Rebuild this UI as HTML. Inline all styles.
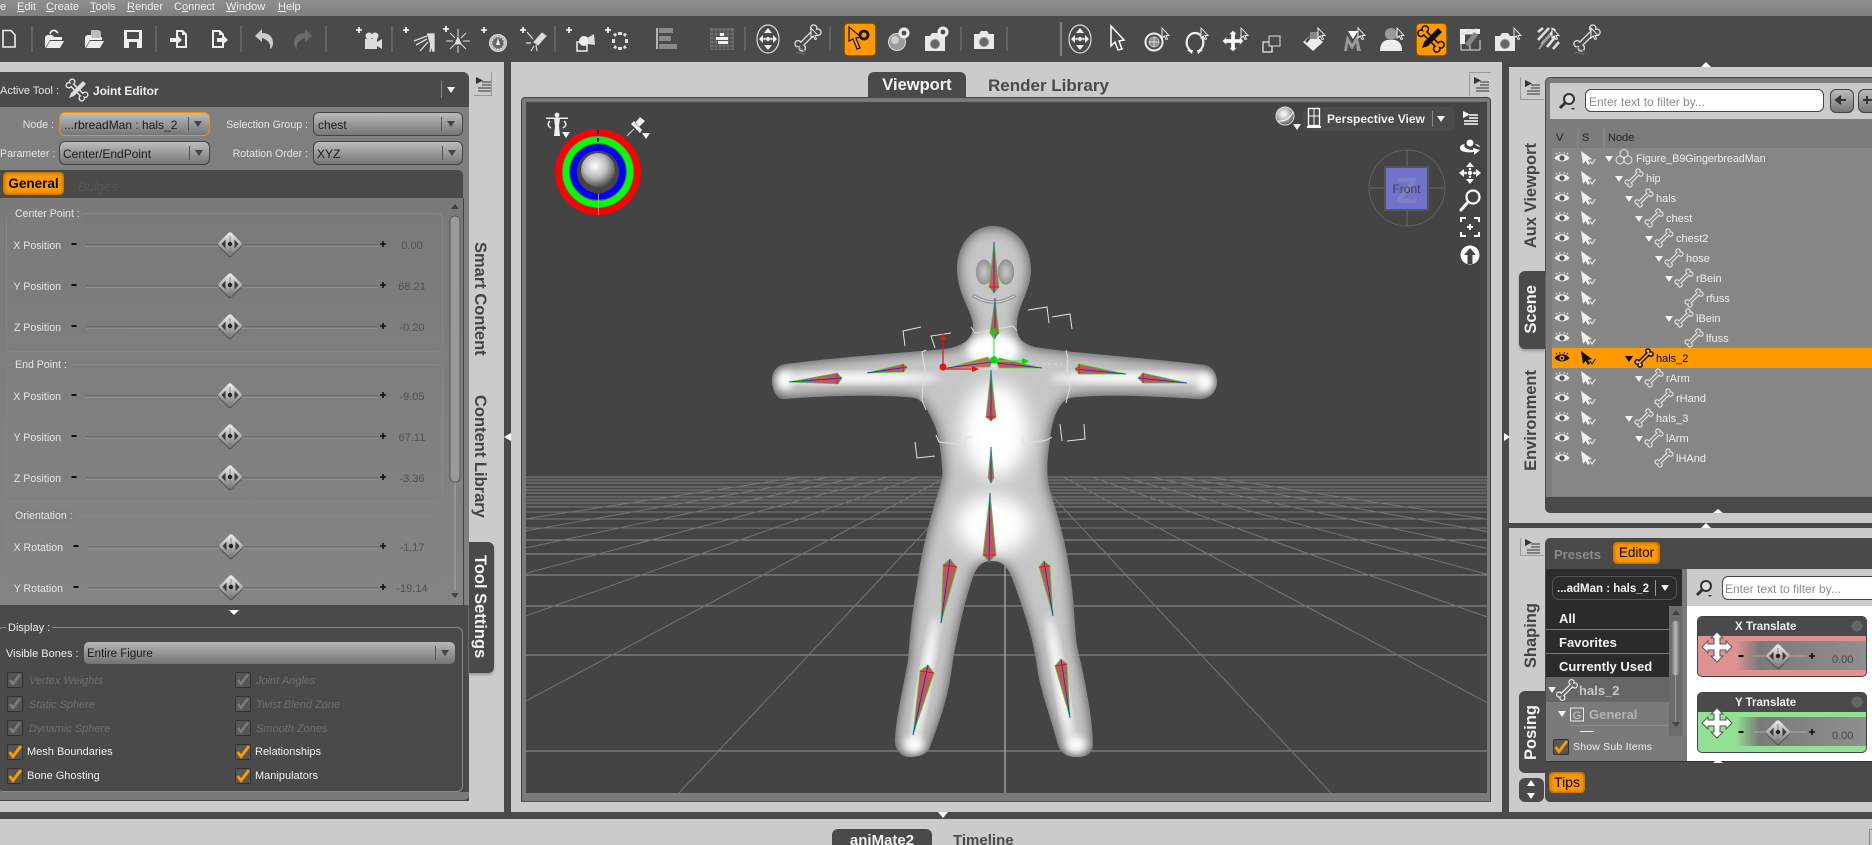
<!DOCTYPE html>
<html><head><meta charset="utf-8"><title>Joint Editor</title>
<style>
html,body{margin:0;padding:0;background:#cbcbcb}
#p{position:relative;width:1872px;height:845px;overflow:hidden;background:#cbcbcb;font-family:"Liberation Sans",Arial,sans-serif;font-size:11px;color:#eee}
#p div{position:absolute;box-sizing:border-box}
.t{position:absolute;white-space:nowrap;line-height:14px;height:14px;margin-top:1px}
.l{color:#e6e6e6;text-align:right;font-size:10.6px}
.v{color:#505050;width:50px;text-align:center}
.c{background:linear-gradient(#bcbcbc,#767676);border:1px solid #444;border-radius:6px}
.d{color:#6f6f6f;font-style:italic}
.w{color:#f0f0f0}
.g{border:1px solid #868686;border-radius:6px}
.vt{position:absolute;writing-mode:vertical-rl;font-weight:bold;font-size:16.5px;line-height:20px;color:#444;white-space:nowrap}
.up{transform:rotate(180deg)}
.n{color:#f0f0f0;font-size:11px}
.o{background:#ff9900;color:#000;border-radius:4px;box-shadow:inset 0 0 4px #7a4a00;text-align:center}
u{text-decoration:underline}
</style></head><body><div id="p">

<!-- bars -->
<div style="left:0;top:0;width:1872px;height:16px;background:linear-gradient(#8e8e8e,#808080)"></div>
<div style="left:0;top:16px;width:1872px;height:46px;background:#4a4a4a"></div>
<div style="left:1502px;top:62px;width:370px;height:5px;background:#4a4a4a"></div>
<div style="left:504px;top:62px;width:7px;height:750px;background:#4a4a4a"></div>
<div style="left:1502px;top:62px;width:7px;height:750px;background:#4a4a4a"></div>
<div style="left:0;top:812px;width:1872px;height:7px;background:#4a4a4a"></div>
<div style="left:1509px;top:523px;width:363px;height:5px;background:#4a4a4a"></div>

<!-- menu -->
<span class="t" style="left:0;top:-1px">e</span>
<span class="t" style="left:17px;top:-1px"><u>E</u>dit</span>
<span class="t" style="left:46px;top:-1px"><u>C</u>reate</span>
<span class="t" style="left:90px;top:-1px"><u>T</u>ools</span>
<span class="t" style="left:127px;top:-1px"><u>R</u>ender</span>
<span class="t" style="left:174px;top:-1px">C<u>o</u>nnect</span>
<span class="t" style="left:226px;top:-1px"><u>W</u>indow</span>
<span class="t" style="left:278px;top:-1px"><u>H</u>elp</span>

<!-- left panel -->
<div style="left:0;top:72px;width:469px;height:35px;background:#4a4a4a;border-radius:0 6px 0 0"></div>
<div style="left:0;top:107px;width:469px;height:498px;background:#7f7f7f"></div>
<div style="left:0;top:170px;width:463px;height:30px;background:#4a4a4a;border-radius:0 5px 0 0"></div>
<div style="left:0;top:198px;width:464px;height:408px;background:linear-gradient(#7a7a7a,#848484);border-right:1px solid #444;border-bottom:1px solid #444"></div>
<div style="left:0;top:605px;width:469px;height:196px;background:#4a4a4a"></div>
<div style="left:0;top:792px;width:469px;height:9px;background:#7a7a7a;border-radius:0 0 5px 0;border-bottom:1px solid #444"></div>
<div style="left:474px;top:72px;width:18px;height:24px;border-right:1px solid #999;border-bottom:1px solid #999"></div>

<span class="t" style="left:0;top:83px;color:#e6e6e6">Active Tool :</span>
<span class="t" style="left:93px;top:83px;font-size:12px;font-weight:bold;color:#eee;letter-spacing:-.1px">Joint Editor</span>
<div style="left:441px;top:81px;width:1px;height:17px;background:#888"></div>

<span class="t l" style="left:0;width:54px;top:117px">Node :</span>
<span class="t l" style="left:0;width:54px;top:146px">Parameter :</span>
<span class="t l" style="left:210px;width:98px;top:117px">Selection Group :</span>
<span class="t l" style="left:210px;width:98px;top:146px">Rotation Order :</span>
<div class="c" style="left:59px;top:112px;width:151px;height:24px;border:1px solid #f09000"></div>
<div class="c" style="left:59px;top:141px;width:151px;height:24px"></div>
<div class="c" style="left:313px;top:112px;width:150px;height:24px"></div>
<div class="c" style="left:313px;top:141px;width:150px;height:24px"></div>
<span class="t" style="left:64px;top:117px;color:#1c1c1c;font-size:12px">...rbreadMan : hals_2</span>
<span class="t" style="left:63px;top:146px;color:#1c1c1c;font-size:12px">Center/EndPoint</span>
<span class="t" style="left:318px;top:117px;color:#1c1c1c;font-size:12px">chest</span>
<span class="t" style="left:317px;top:146px;color:#1c1c1c;font-size:12px">XYZ</span>
<div style="left:188px;top:117px;width:1px;height:14px;background:#555"></div>
<div style="left:189px;top:146px;width:1px;height:14px;background:#555"></div>
<div style="left:441px;top:117px;width:1px;height:14px;background:#555"></div>
<div style="left:442px;top:146px;width:1px;height:14px;background:#555"></div>
<div class="o" style="left:3px;top:172px;width:61px;height:23px;font-size:13.5px;font-weight:bold;line-height:24px">General</div>
<span class="t" style="left:78px;top:179px;color:#565656;font-style:italic;font-size:13px">Bulges</span>

<div class="g" style="left:6px;top:213px;width:437px;height:139px"></div>
<div class="g" style="left:6px;top:364px;width:437px;height:138px"></div>
<div class="g" style="left:6px;top:515px;width:437px;height:90px;border-bottom:0"></div>
<span class="t l" style="left:12px;top:206px;background:#7c7c7c;padding:0 3px;text-align:left">Center Point :</span>
<span class="t l" style="left:12px;top:357px;background:#7e7e7e;padding:0 3px;text-align:left">End Point :</span>
<span class="t l" style="left:12px;top:508px;background:#808080;padding:0 3px;text-align:left">Orientation :</span>

<span class="t l" style="left:0;width:61px;top:238px">X Position</span>
<span class="t l" style="left:0;width:61px;top:279px">Y Position</span>
<span class="t l" style="left:0;width:61px;top:320px">Z Position</span>
<span class="t l" style="left:0;width:61px;top:389px">X Position</span>
<span class="t l" style="left:0;width:61px;top:430px">Y Position</span>
<span class="t l" style="left:0;width:61px;top:471px">Z Position</span>
<span class="t l" style="left:0;width:63px;top:540px">X Rotation</span>
<span class="t l" style="left:0;width:63px;top:581px">Y Rotation</span>
<span class="t v" style="left:387px;top:238px">0.00</span>
<span class="t v" style="left:387px;top:279px">68.21</span>
<span class="t v" style="left:387px;top:320px">-0.20</span>
<span class="t v" style="left:387px;top:389px">-9.05</span>
<span class="t v" style="left:387px;top:430px">67.11</span>
<span class="t v" style="left:387px;top:471px">-3.36</span>
<span class="t v" style="left:387px;top:540px">-1.17</span>
<span class="t v" style="left:387px;top:581px">-19.14</span>

<!-- display -->
<div style="left:-3px;top:627px;width:466px;height:165px;border:1px solid #8a8a8a;border-radius:6px"></div>
<span class="t" style="left:6px;top:620px;background:#4a4a4a;padding:0 2px;color:#eee">Display :</span>
<span class="t" style="left:6px;top:646px;color:#eee">Visible Bones :</span>
<div style="left:84px;top:642px;width:371px;height:22px;background:linear-gradient(#b6b6b6,#737373);border-radius:5px"></div>
<span class="t" style="left:87px;top:646px;color:#1c1c1c;font-size:11.5px">Entire Figure</span>
<div style="left:435px;top:646px;width:1px;height:14px;background:#555"></div>
<span class="t d" style="left:29px;top:673px">Vertex Weights</span>
<span class="t d" style="left:29px;top:697px">Static Sphere</span>
<span class="t d" style="left:29px;top:721px">Dynamic Sphere</span>
<span class="t w" style="left:27px;top:744px">Mesh Boundaries</span>
<span class="t w" style="left:27px;top:768px">Bone Ghosting</span>
<span class="t d" style="left:256px;top:673px">Joint Angles</span>
<span class="t d" style="left:256px;top:697px">Twist Blend Zone</span>
<span class="t d" style="left:256px;top:721px">Smooth Zones</span>
<span class="t w" style="left:255px;top:744px">Relationships</span>
<span class="t w" style="left:255px;top:768px">Manipulators</span>

<!-- left side tabs -->
<div class="vt" style="left:470px;top:242px">Smart Content</div>
<div class="vt" style="left:470px;top:395px">Content Library</div>
<div style="left:469px;top:542px;width:25px;height:131px;background:#4a4a4a;border-radius:0 6px 6px 0;box-shadow:0 2px 2px #999"></div>
<div class="vt" style="left:470px;top:555px;color:#f4f4f4">Tool Settings</div>

<!-- viewport -->
<div style="left:868px;top:72px;width:98px;height:25px;background:#4a4a4a;border-radius:6px 6px 0 0;color:#f4f4f4;font-weight:bold;font-size:16.5px;line-height:27px;text-align:center">Viewport</div>
<span class="t" style="left:988px;top:76px;color:#4a4a4a;font-weight:bold;font-size:17px;line-height:18px;height:18px">Render Library</span>
<div style="left:1469px;top:72px;width:22px;height:24px;border-left:1px solid #999;border-top:1px solid #999"></div>
<div style="left:521px;top:97px;width:970px;height:705px;background:#7a7a7a;border:1px solid #444;border-bottom:1px solid #555;border-radius:4px 4px 0 0"></div>
<div id="vp" style="left:526px;top:102px;width:961px;height:691px;background:#444"></div>
<div style="left:1303px;top:107px;width:152px;height:24px;background:#4b4b4b;border-radius:6px"></div>
<span class="t" style="left:1327px;top:111px;font-size:12px;font-weight:bold;color:#f0f0f0">Perspective View</span>
<div style="left:1432px;top:111px;width:1px;height:16px;background:#888"></div>

<!-- right top panel -->
<div style="left:1545px;top:77px;width:327px;height:436px;background:#4a4a4a;border-radius:5px 0 0 5px"></div>
<div style="left:1546px;top:78px;width:326px;height:419px;background:#7c7c7c;border-radius:4px 0 0 0"></div>
<div style="left:1550px;top:83px;width:322px;height:36px;background:#cbcbcb"></div>
<div style="left:1552px;top:127px;width:320px;height:369px;background:#868686"></div>
<div style="left:1585px;top:89px;width:239px;height:23px;background:#fff;border:1px solid #444;border-radius:6px"></div>
<span class="t" style="left:1589px;top:94px;color:#8c8c8c;font-size:12px">Enter text to filter by...</span>
<div class="c" style="left:1830px;top:89px;width:24px;height:24px"></div>
<div class="c" style="left:1858px;top:89px;width:24px;height:24px"></div>
<div style="left:1552px;top:127px;width:25px;height:21px;background:#7c7c7c"></div>
<div style="left:1579px;top:127px;width:24px;height:21px;background:#7c7c7c"></div>
<div style="left:1605px;top:127px;width:267px;height:21px;background:#7c7c7c"></div>
<span class="t" style="left:1556px;top:130px;color:#222">V</span>
<span class="t" style="left:1582px;top:130px;color:#222">S</span>
<span class="t" style="left:1608px;top:130px;color:#222">Node</span>
<div style="left:1552px;top:348px;width:320px;height:20px;background:#ff9900"></div>
<span class="t n" style="left:1636px;top:151px;font-size:10.7px">Figure_B9GingerbreadMan</span>
<span class="t n" style="left:1646px;top:171px">hip</span>
<span class="t n" style="left:1656px;top:191px">hals</span>
<span class="t n" style="left:1666px;top:211px">chest</span>
<span class="t n" style="left:1676px;top:231px">chest2</span>
<span class="t n" style="left:1686px;top:251px">hose</span>
<span class="t n" style="left:1696px;top:271px">rBein</span>
<span class="t n" style="left:1706px;top:291px">rfuss</span>
<span class="t n" style="left:1696px;top:311px">lBein</span>
<span class="t n" style="left:1706px;top:331px">lfuss</span>
<span class="t n" style="left:1656px;top:351px;color:#000">hals_2</span>
<span class="t n" style="left:1666px;top:371px">rArm</span>
<span class="t n" style="left:1676px;top:391px">rHand</span>
<span class="t n" style="left:1656px;top:411px">hals_3</span>
<span class="t n" style="left:1666px;top:431px">lArm</span>
<span class="t n" style="left:1676px;top:451px">lHAnd</span>
<div style="left:1520px;top:77px;width:24px;height:23px;border-left:1px solid #999;border-bottom:1px solid #999"></div>
<div class="vt up" style="left:1521px;top:143px">Aux Viewport</div>
<div style="left:1519px;top:271px;width:26px;height:78px;background:#4a4a4a;border-radius:6px 0 0 6px;box-shadow:0 2px 2px #999"></div>
<div class="vt up" style="left:1521px;top:285px;color:#f4f4f4">Scene</div>
<div class="vt up" style="left:1521px;top:370px">Environment</div>

<!-- right bottom panel -->
<div style="left:1545px;top:538px;width:327px;height:264px;background:#4a4a4a;border-radius:5px 0 0 5px"></div>
<span class="t" style="left:1554px;top:546px;color:#8a8a8a;font-weight:bold;font-size:13px;line-height:16px;height:16px">Presets</span>
<div class="o" style="left:1613px;top:542px;width:47px;height:22px;font-size:13.5px;line-height:22px">Editor</div>
<div style="left:1546px;top:569px;width:141px;height:192px;background:#7a7a7a"></div>
<div style="left:1687px;top:569px;width:185px;height:192px;background:#fff"></div>
<div style="left:1687px;top:569px;width:185px;height:37px;background:#cbcbcb"></div>
<div style="left:1546px;top:569px;width:136px;height:37px;background:#2b2b2b"></div>
<div style="left:1552px;top:576px;width:125px;height:24px;border:1px solid #555;border-radius:7px"></div>
<span class="t" style="left:1557px;top:581px;font-weight:bold;font-size:11.5px;color:#f4f4f4">...adMan : hals_2</span>
<div style="left:1655px;top:580px;width:1px;height:16px;background:#999"></div>
<div style="left:1722px;top:576px;width:160px;height:24px;background:#fff;border:1px solid #444;border-radius:6px"></div>
<span class="t" style="left:1725px;top:581px;color:#8c8c8c;font-size:12px">Enter text to filter by...</span>
<div style="left:1546px;top:606px;width:123px;height:23px;background:#2b2b2b"></div>
<div style="left:1546px;top:630px;width:123px;height:23px;background:#2b2b2b"></div>
<div style="left:1546px;top:654px;width:123px;height:23px;background:#2b2b2b"></div>
<div style="left:1546px;top:677px;width:123px;height:25px;background:#666"></div>
<span class="t" style="left:1559px;top:611px;font-weight:bold;font-size:13px;color:#f4f4f4">All</span>
<span class="t" style="left:1559px;top:635px;font-weight:bold;font-size:13px;color:#f4f4f4">Favorites</span>
<span class="t" style="left:1559px;top:659px;font-weight:bold;font-size:13px;color:#f4f4f4">Currently Used</span>
<span class="t" style="left:1579px;top:683px;font-weight:bold;font-size:13px;color:#c8c8c8">hals_2</span>
<span class="t" style="left:1589px;top:707px;font-weight:bold;font-size:13px;color:#b4b4b4">General</span>
<div style="left:1570px;top:725px;width:99px;height:1px;background:#8c8c8c"></div>
<div style="left:1580px;top:731px;width:14px;height:1px;background:#eee"></div>
<div style="left:1669px;top:606px;width:13px;height:130px;background:#6c6c6c"></div>
<div style="left:1671px;top:621px;width:9px;height:54px;background:linear-gradient(90deg,#666,#bbb,#666);border-radius:4px"></div>
<div style="left:1675px;top:675px;width:1px;height:50px;background:#999"></div>
<span class="t" style="left:1573px;top:739px;color:#eee;font-size:10.5px;letter-spacing:.2px">Show Sub Items</span>
<div style="left:1546px;top:761px;width:326px;height:1px;background:#333"></div>

<div style="left:1697px;top:616px;width:170px;height:61px;background:#e09292;border:1px solid #444;border-radius:5px"></div>
<div style="left:1698px;top:617px;width:168px;height:19px;background:#4a4a4a;border-radius:4px 4px 0 0"></div>
<div style="left:1736px;top:641px;width:130px;height:29px;background:linear-gradient(90deg,#e09292 0,#7a7a7a 18%,#8f8f8f 100%)"></div>
<div style="left:1697px;top:692px;width:170px;height:61px;background:#92e092;border:1px solid #444;border-radius:5px"></div>
<div style="left:1698px;top:693px;width:168px;height:19px;background:#4a4a4a;border-radius:4px 4px 0 0"></div>
<div style="left:1736px;top:717px;width:130px;height:29px;background:linear-gradient(90deg,#92e092 0,#7a7a7a 18%,#8f8f8f 100%)"></div>
<span class="t" style="left:1735px;top:619px;font-weight:bold;font-size:11.5px;color:#f0f0f0">X Translate</span>
<span class="t" style="left:1735px;top:695px;font-weight:bold;font-size:11.5px;color:#f0f0f0">Y Translate</span>
<span class="t" style="left:1832px;top:652px;color:#444;font-size:11px">0.00</span>
<span class="t" style="left:1832px;top:728px;color:#444;font-size:11px">0.00</span>
<div class="o" style="left:1549px;top:772px;width:36px;height:21px;font-size:14px;line-height:21px">Tips</div>
<div style="left:1519px;top:778px;width:25px;height:12px;background:#4a4a4a;border-radius:6px 6px 0 0"></div>
<div style="left:1519px;top:790px;width:25px;height:12px;background:#4a4a4a;border-radius:0 0 6px 6px"></div>
<div style="left:1520px;top:538px;width:24px;height:18px;border-left:1px solid #999;border-bottom:1px solid #999"></div>
<div class="vt up" style="left:1521px;top:603px">Shaping</div>
<div style="left:1519px;top:691px;width:26px;height:82px;background:#4a4a4a;border-radius:6px 0 0 6px"></div>
<div class="vt up" style="left:1521px;top:705px;color:#f4f4f4">Posing</div>

<!-- bottom tabs -->
<div style="left:832px;top:829px;width:100px;height:20px;background:#4a4a4a;border-radius:6px 6px 0 0;color:#f4f4f4;font-weight:bold;font-size:15px;line-height:23px;text-align:center">aniMate2</div>
<span class="t" style="left:953px;top:831px;color:#4a4a4a;font-weight:bold;font-size:15px;line-height:18px;height:18px">Timeline</span>
<div style="left:1869px;top:829px;width:3px;height:16px;border-left:1px solid #888;border-top:1px solid #888"></div>

<!-- graphics overlay -->
<svg width="1872" height="845" viewBox="0 0 1872 845" style="position:absolute;left:0;top:0" xmlns="http://www.w3.org/2000/svg">
<defs>
<linearGradient id="kg" x1="0" y1="0" x2="0" y2="1"><stop offset="0" stop-color="#e6e6e6"/><stop offset="1" stop-color="#808080"/></linearGradient>
<radialGradient id="sg" cx=".42" cy=".38" r=".62"><stop offset="0" stop-color="#fff"/><stop offset=".55" stop-color="#bbb"/><stop offset="1" stop-color="#555"/></radialGradient>
<radialGradient id="eg" cx=".5" cy=".5" r=".55"><stop offset="0" stop-color="#c9c9c9"/><stop offset=".8" stop-color="#9a9a9a"/><stop offset="1" stop-color="#666"/></radialGradient>
<filter id="b5" x="-10%" y="-10%" width="120%" height="120%"><feGaussianBlur stdDeviation="7"/></filter>
<filter id="b3" x="-30%" y="-30%" width="160%" height="160%"><feGaussianBlur stdDeviation="4"/></filter>
<filter id="b9" x="-40%" y="-40%" width="180%" height="180%"><feGaussianBlur stdDeviation="9"/></filter>
<clipPath id="vc"><rect x="526" y="102" width="961" height="691"/></clipPath>
<clipPath id="bc"><path id="bp" d="M993 226C1015 226 1031 245 1031 270C1031 290 1018 305 1017 323C1016 338 1022 343 1035 347C1080 354 1150 358 1205 365C1214 367 1217 375 1217 382C1217 393 1208 400 1198 399C1150 396 1100 394 1070 398C1058 402 1052 420 1050 440C1047 460 1046 475 1050 490C1056 510 1066 540 1071 580C1075 610 1075 640 1078 650C1085 680 1093 720 1093 745C1093 755 1083 758 1075 757C1066 757 1060 752 1058 745C1050 715 1040 690 1037 667C1033 635 1020 600 1012 578C1006 562 998 561 990 561C982 561 976 568 973 577C965 600 956 640 952 667C948 700 938 725 930 747C927 755 918 757 910 757C899 757 894 748 895 738C897 710 905 680 908 660C910 630 914 600 917 585C920 560 928 525 933 510C938 490 944 480 942 467C941 450 938 430 932 420C927 408 922 400 915 398C880 394 820 396 785 399C775 400 772 388 772 380C772 372 776 366 785 364C840 357 910 352 945 349C962 346 973 340 973 326C972 310 957 295 957 268C957 245 972 226 993 226Z"/></clipPath>

<g id="knob"><path d="M0-9.500L9.500 0 0 9.500-9.500 0Z" transform="translate(0 1.500)" fill="#555" stroke="#555" stroke-width="4.500" stroke-linejoin="round"/><path d="M0-9.500L9.500 0 0 9.500-9.500 0Z" fill="url(#kg)" stroke="url(#kg)" stroke-width="4.500" stroke-linejoin="round"/><path d="M0-8V8" stroke="#8a8a8a"/><path d="M-8.500 0L-4.500-4.500V4.500ZM8.500 0L4.500-4.500V4.500Z" fill="#3a3a3a"/><circle r="2.200" fill="#222"/></g>
<g id="minus"><rect x="-2.500" y="-1" width="5" height="2" fill="#111"/></g>
<g id="plus"><path d="M-3 0H3M0-3V3" stroke="#111" stroke-width="1.600"/></g>
<g id="eye"><path d="M-7.500 0C-4-5 4-5 7.500 0C4 4.500-4 4.500-7.500 0Z" fill="#eee"/><circle r="2.600" fill="#555"/><path d="M-5-3.500L-6-5M-2-4.500L-2.500-6M2-4.500L2.500-6M5-3.500L6-5" stroke="#eee"/></g>
<g id="eyeb"><path d="M-7.500 0C-4-5 4-5 7.500 0C4 4.500-4 4.500-7.500 0Z" fill="#111"/><circle r="2.600" fill="#ff9900"/><circle r="1.300" fill="#111"/><path d="M-5-3.500L-6-5M-2-4.500L-2.500-6M2-4.500L2.500-6M5-3.500L6-5" stroke="#111"/></g>
<g id="arr"><path d="M-7-7L-5 6-2.500 3 0 7 2 5.500 0 2 4 1Z" fill="#eee"/><path d="M2 3L4 6 7.500 1" fill="none" stroke="#eee"/></g>
<g id="arrb"><path d="M-7-7L-5 6-2.500 3 0 7 2 5.500 0 2 4 1Z" fill="#111"/><path d="M2 3L4 6 7.500 1" fill="none" stroke="#111"/></g>
<path id="bshape" d="M-5.500-1.500H5.500A2.200 2.200 0 1 1 8.500 0A2.200 2.200 0 1 1 5.500 1.500H-5.500A2.200 2.200 0 1 1-8.500 0A2.200 2.200 0 1 1-5.500-1.500Z" transform="rotate(-45)"/>
<g id="bone"><use href="#bshape" fill="none" stroke="#e8e8e8" stroke-width="1.100"/></g>
<g id="boneb"><use href="#bshape" fill="#ffb84a" stroke="#111" stroke-width="1.500"/></g>
<path id="tri" d="M-4-3H4L0 3Z" fill="#f2f2f2"/>
<path id="trid" d="M-4-3H4L0 3Z" fill="#444"/>
<path id="trik" d="M-4-3H4L0 3Z" fill="#000"/>
<g id="chk"><rect x="-7.500" y="-7.500" width="15" height="15" rx="1.500" fill="#555" stroke="#333"/><path d="M-5 0L-2 4 5-5.500" fill="none" stroke="#7c7c7c" stroke-width="2.600"/></g>
<g id="chko"><rect x="-7.500" y="-7.500" width="15" height="15" rx="1.500" fill="#555" stroke="#333"/><path d="M-5.500 0L-2 4.500 6-6" fill="none" stroke="#ff9900" stroke-width="3"/></g>
<g id="mag"><circle cx="2" cy="-2" r="5" fill="#ddd" stroke="#333" stroke-width="2"/><path d="M-2 2L-7 7" stroke="#333" stroke-width="3"/><path d="M4 7L8 7L6 9Z" fill="#333"/></g>
<g id="menu"><path d="M-7-7L0-3.500-7 0Z" fill="#333"/><path d="M-1-2H8M-1 1H8M-5 4H8M-5 7H8" stroke="#333"/></g>
<g id="menuw"><path d="M-7-7L0-3.500-7 0Z" fill="#fff"/><path d="M-1-3H8M-1 0H8M-6 3H8M-6 6H8" stroke="#fff" stroke-width="1.400"/></g>
<g id="mv"><path d="M0-15L-6-9H-3V-3H-9V-6L-15 0-9 6V3H-3V9H-6L0 15 6 9H3V3H9V6L15 0 9-6V-3H3V-9H6Z" fill="#fff" stroke="#555" stroke-width="1"/></g>
<g id="gear"><circle r="4" fill="none" stroke="#666" stroke-width="2.400"/><path d="M0-6V6M-6 0H6M-4-4L4 4M-4 4L4-4" stroke="#666" stroke-width="1.500"/></g>
<g id="cur"><path d="M0 0V10L2.300 8 4 11.500 5.500 11 4 7.500H7Z" fill="#4a4a4a" stroke="#fff" stroke-width=".9"/></g>
<g id="pl"><path d="M-3 0H3M0-3V3" stroke="#fff" stroke-width="1.600"/></g>
<g id="nav"><ellipse rx="11" ry="14" fill="none" stroke="#ddd" stroke-width="1.200"/><path d="M0-11L-4-6H4ZM0 11L-4 6H4ZM-9 0L-5-4V4ZM9 0L5-4V4Z" fill="#eee"/><circle r="2" fill="#eee"/><circle cx="-3.500" r="1.200" fill="#eee"/><circle cx="3.500" r="1.200" fill="#eee"/></g>
<g id="bbig"><use href="#bshape" transform="translate(1 -3) scale(1.450)" fill="none" stroke="#d8d8d8" stroke-width=".95"/><path d="M-11 7C-7 5-5 10-1 10M-11 12C-7 10-5 14-2 13" fill="none" stroke="#777"/></g>
<g id="camw"><path d="M-10-6H-5L-3-9H3L5-6H10V9H-10Z" fill="#e8e8e8"/><circle cy="2" r="4.600" fill="#666" stroke="#999"/></g>
</defs>

<!-- toolbar separators -->
<path d="M32 26V52M156 26V52M241 26V52M326 26V52M392 26V52M555 26V52M745 27V51M830 27V51M961 27V51M1007 27V51" stroke="#6a6a6a" stroke-width="1.600"/>
<path d="M1061 22V56" stroke="#808080" stroke-width="2.400"/>

<!-- toolbar icons -->
<path d="M3 30.500H11L15 35V47H3Z" fill="none" stroke="#eee" stroke-width="1.600"/>
<g transform="translate(54 39)"><path d="M-9 9V-2L-7-4H-2L0-2H8V1H-4L-9 9ZM-8 9L-4 2H10L6 9Z" fill="#eee"/><path d="M-4-5C-3-9 0-9 2-8L4-6" fill="none" stroke="#eee" stroke-width="1.600"/></g>
<g transform="translate(94 39)"><path d="M-9 9V-2L-7-4H-2L0-2H8V1H-4L-9 9ZM-8 9L-4 2H10L6 9Z" fill="#eee"/><path d="M-3-3V-9H5L7-7V-1H-2" fill="#bbb"/></g>
<g transform="translate(133 39)"><path d="M-9-9H9V9H-9Z" fill="#eee"/><rect x="-6" y="-7" width="12" height="7" fill="#4a4a4a"/><rect x="-4" y="3" width="8" height="6" fill="#4a4a4a"/></g>
<g transform="translate(179 39)"><path d="M-3-9H4L8-5V9H-3V4H-1V7H6V-4H3V-7H-1V-3H-3Z" fill="#eee"/><path d="M-9-1H-3V-5L3 1-3 6V3H-9Z" fill="#eee"/></g>
<g transform="translate(219 39)"><path d="M-7-9H1L5-5V-1H3V-4H0V-7H-5V7H3V4H5V9H-7Z" fill="#eee"/><path d="M-2-1H3V-5L9 1 3 6V3H-2Z" fill="#eee"/></g>
<g transform="translate(264 39)"><path d="M-9-3L-2-10V-6C6-6 9-1 9 4 9 7 8 9 6 10 7 6 5 1-2-1V3Z" fill="#ccc"/></g>
<g transform="translate(303 39)"><path d="M9-3L2-10V-6C-6-6-9-1-9 4-9 7-8 9-6 10-7 6-5 1 2-1V3Z" fill="#6c6c6c"/></g>
<!-- create items -->
<use href="#pl" x="359" y="30"/>
<g transform="translate(372 42)"><circle cx="-3" cy="-6" r="3.500" fill="#ddd"/><circle cx="3" cy="-6" r="3.500" fill="#ddd"/><rect x="-7" y="-3" width="12" height="10" fill="#ddd"/><path d="M5 0L10-3V7L5 4Z" fill="#ddd"/></g>
<use href="#pl" x="406" y="30"/>
<g transform="translate(424 42)" stroke="#ddd" stroke-width="1.300"><path d="M3-8H10V9H8" fill="#ddd"/><path d="M3-6L-10-1M3-3L-8 3M4 0L-4 9M7 1L6 10" fill="none"/></g>
<use href="#pl" x="446" y="29"/>
<g transform="translate(458 41)" stroke="#ddd" stroke-width="1" fill="none"><path d="M0-12V-5M0 5V12M-12 0H-5M5 0H12M-8-8L-3-3M3 3L8 8M8-8L3-3M-3 3L-8 8"/><path d="M0-4L-3 3H3Z" fill="#ddd"/></g>
<use href="#pl" x="484" y="30"/>
<g transform="translate(498 43)"><circle r="8.500" fill="#bbb" stroke="#ddd"/><circle r="6" fill="#666" stroke="#eee" stroke-dasharray="1.500 1.500"/><path d="M0-5L-2 2H2Z" fill="#eee"/></g>
<use href="#pl" x="523" y="30"/>
<g transform="translate(536 40)" stroke="#ddd" fill="none"><path d="M-2 2L6-7 10-4 2 5Z" fill="#ddd"/><path d="M-3-1L-9-8M-5 3L-10 3M-2 6L-5 11M0 5L1 11" stroke-width="1.200"/></g>
<use href="#pl" x="569" y="30"/>
<g transform="translate(585 43)"><rect x="-8" y="-1" width="10" height="9" fill="none" stroke="#eee" stroke-width="1.500"/><circle cx="-1" cy="-2" r="5" fill="#eee"/><path d="M2-5L9-9 10 2 3 1Z" fill="#ddd"/></g>
<use href="#pl" x="608" y="30"/>
<g transform="translate(620 41)" fill="#ddd"><path d="M-2-9H2V-6H-2ZM-2 6H2V9H-2ZM-8-2H-5V2H-8ZM5-2H8V2H5ZM-7-7L-4-8-3-6-5-4ZM7-7L4-8 3-6 5-4ZM-7 7L-4 8-3 6-5 4ZM7 7L4 8 3 6 5 4Z"/></g>
<!-- align + grid -->
<g transform="translate(664 39)"><path d="M-7-11V10" stroke="#eee" stroke-width="1.300"/><rect x="-5" y="-11" width="14" height="5" fill="#8a8a8a"/><rect x="-5" y="-3" width="12" height="5" fill="#8a8a8a"/><rect x="-5" y="5" width="18" height="5" fill="#8a8a8a"/></g>
<g transform="translate(722 39)"><path d="M-12-11H12V11H-12Z" fill="#6e6e6e"/><path d="M-12-7H12M-12-3H12M-12 1H12M-12 5H12M-12 9H12M-8-11V11M-4-11V11M0-11V11M4-11V11M8-11V11" stroke="#4a4a4a"/><path d="M-2-6H2V-3H-2ZM-6-2H6V1H-6ZM-4 2H6V5H-4Z" fill="#eee"/></g>
<use href="#nav" x="768" y="39"/>
<use href="#bbig" x="807" y="41"/><use href="#cur" x="811" y="28"/>
<rect x="844" y="23" width="32" height="33" rx="4" fill="#ff9900" stroke="#6a4a10" stroke-width="1.500"/>
<g transform="translate(860 40)"><path d="M-11-13V1L-7-1-3 9 0 8-4-2 1-3Z" fill="none" stroke="#111" stroke-width="1.200"/><circle cx="4" cy="-5" r="5.400" fill="#111"/><circle cx="4" cy="-5" r="2.600" fill="#ff9900"/></g>
<g transform="translate(897 42)"><circle r="8.500" fill="#999" stroke="#ddd"/><circle cx="-2" cy="-2" r="4" fill="#ccc"/><circle cx="7" cy="-9" r="5.500" fill="#eee"/><circle cx="7" cy="-9" r="2.400" fill="#4a4a4a"/></g>
<g transform="translate(935 42)"><use href="#camw"/><circle cx="8" cy="-10" r="5.500" fill="#eee"/><circle cx="8" cy="-10" r="2.400" fill="#4a4a4a"/></g>
<use href="#camw" x="984" y="40"/>
<!-- tools -->
<use href="#nav" x="1080" y="39"/>
<g transform="translate(1118 39)"><path d="M-7-13V7L-3 3 0 11 4 10 1 2 6 1Z" fill="#4a4a4a" stroke="#fff" stroke-width="1.500"/></g>
<g transform="translate(1154 42)"><circle r="8.500" fill="none" stroke="#eee" stroke-width="2"/><circle r="5" fill="#888" stroke="#bbb"/><path d="M-5 0H5M0-5V5" stroke="#ddd"/></g><use href="#cur" x="1162" y="28"/>
<g transform="translate(1195 42)"><path d="M-4 9C-12 3-8-9 0-9S12 3 4 9" fill="none" stroke="#eee" stroke-width="2.200"/><path d="M-8 8H-2L-3 12ZM8 8H2L3 12Z" fill="#eee"/></g><use href="#cur" x="1201" y="28"/>
<use href="#mv" transform="translate(1233 41) scale(.72)"/><use href="#cur" x="1241" y="28"/>
<g transform="translate(1272 45)"><rect x="-9" y="-3" width="9" height="10" fill="#4a4a4a" stroke="#eee" stroke-width="1.200"/><rect x="-3" y="-9" width="11" height="10" fill="#4a4a4a" stroke="#ddd"/></g>
<g transform="translate(1313 42)"><path d="M-10 0L0-9 10 0 0 9Z" fill="#eee"/><path d="M-8-1L-2-7V-4L-6 1Z" fill="#4a4a4a"/><rect x="-3" y="-10" width="8" height="7" fill="#888"/></g><use href="#cur" x="1318" y="28"/>
<g transform="translate(1353 44)"><path d="M-9 7L-6-9-1 0 4-9 8 7H4L3-1-1 6-5-1-6 7Z" fill="#9a9a9a"/><path d="M-5-13H5L0-5Z" fill="#fff"/></g><use href="#cur" x="1358" y="28"/>
<g transform="translate(1391 40)"><circle cy="-6" r="6" fill="#999"/><path d="M-11 11C-11 2-6 0-3 0H3C6 0 11 2 11 11Z" fill="#eee"/></g><use href="#cur" x="1397" y="28"/>
<rect x="1416" y="23" width="31" height="33" rx="4" fill="#ff9900" stroke="#6a4a10" stroke-width="1.500"/>
<g transform="translate(1431 39)"><use href="#bshape" transform="rotate(90) scale(1.450)" fill="none" stroke="#111" stroke-width="1.100"/><path d="M7-11L11-7-3 7-9 9-7 3Z" fill="#111"/></g>
<g transform="translate(1470 40)"><path d="M-10-11H10V-6H-5V4H-10Z" fill="#eee"/><path d="M-10-6L6-11V-6ZM-9 10H10M0 0V10M10 0V10M-9 0V10" stroke="#ddd" fill="none"/><path d="M-5 4L4-8 8-5-1 7Z" fill="#888"/></g>
<use href="#camw" x="1505" y="42"/><use href="#cur" x="1514" y="28"/>
<g transform="translate(1548 39)" stroke="#ddd" stroke-width="2.600"><path d="M-10-7L-5-11M-10 1L1-11M-6 5L7-10M-1 8L8-3M5 10L11 3"/><path d="M-9 10L2-5" stroke="#999" stroke-width="2"/></g><use href="#cur" x="1552" y="28"/>
<use href="#bbig" x="1586" y="41"/><use href="#cur" x="1591" y="28"/>
<path d="M1706 62L1711 67H1701Z" fill="#fff"/>

<!-- left panel icons -->
<g transform="translate(77 90)"><use href="#bshape" transform="rotate(90) scale(1.200)" fill="none" stroke="#eee" stroke-width="1.100"/><path d="M6-9L9-6-3 6-8 8-6 3Z" fill="#ddd"/></g>
<use href="#tri" x="451" y="90"/>
<use href="#trid" x="198" y="124"/><use href="#trid" x="199" y="153"/><use href="#trid" x="451" y="124"/><use href="#trid" x="452" y="153"/>
<use href="#trid" x="445" y="653"/>
<use href="#menu" x="483" y="84"/>
<path d="M229 610H239L234 615Z" fill="#fff"/>
<!-- sliders -->
<g fill="none">
<path d="M86 245H378M86 286H378M86 327H378M86 396H378M86 437H378M86 478H378M88 547H378M88 588H378" stroke="#595959"/>
<path d="M86 246H378M86 287H378M86 328H378M86 397H378M86 438H378M86 479H378M88 548H378M88 589H378" stroke="#a0a0a0"/>
</g>
<use href="#minus" x="74" y="244"/><use href="#minus" x="74" y="285"/><use href="#minus" x="74" y="326"/><use href="#minus" x="74" y="395"/><use href="#minus" x="74" y="436"/><use href="#minus" x="74" y="477"/><use href="#minus" x="76" y="546"/><use href="#minus" x="76" y="587"/>
<use href="#plus" x="383" y="244"/><use href="#plus" x="383" y="285"/><use href="#plus" x="383" y="326"/><use href="#plus" x="383" y="395"/><use href="#plus" x="383" y="436"/><use href="#plus" x="383" y="477"/><use href="#plus" x="383" y="546"/><use href="#plus" x="383" y="587"/>
<use href="#knob" x="230" y="244"/><use href="#knob" x="230" y="285"/><use href="#knob" x="230" y="326"/><use href="#knob" x="230" y="395"/><use href="#knob" x="230" y="436"/><use href="#knob" x="230" y="477"/><use href="#knob" x="231" y="546"/><use href="#knob" x="231" y="587"/>
<!-- left scrollbar -->
<path d="M455 482V590" stroke="#aaa"/>
<rect x="450" y="216" width="10" height="266" rx="4.500" fill="#9a9a9a" stroke="#555"/>
<path d="M451 209L459 209 455 204Z" fill="#444"/><path d="M451 593L459 593 455 598Z" fill="#444"/>
<!-- display checks -->
<use href="#chk" x="15" y="680"/><use href="#chk" x="15" y="704"/><use href="#chk" x="15" y="728"/><use href="#chko" x="15" y="752"/><use href="#chko" x="15" y="776"/>
<use href="#chk" x="243" y="680"/><use href="#chk" x="243" y="704"/><use href="#chk" x="243" y="728"/><use href="#chko" x="243" y="752"/><use href="#chko" x="243" y="776"/>

<path d="M504 437L511 433V441Z" fill="#fff"/>
<use href="#menu" x="1481" y="84"/>
<path d="M1504 433V441L1510 437Z" fill="#fff"/>

<!-- 3D viewport -->
<g clip-path="url(#vc)">
<rect x="526" y="477" width="961" height="30" fill="#5a5a5a" opacity=".3"/>
<path d="M526 477H1487M526 480H1487M526 483H1487M526 487H1487M526 490H1487M526 493H1487M526 497H1487M526 500H1487M526 503H1487M526 507H1487M526 512H1487M526 519H1487M526 528H1487" stroke="#7a7a7a" fill="none"/>
<path d="M526 540H1487M526 554H1487M526 575H1487M526 606H1487M526 655H1487M526 751H1487" stroke="#959595" fill="none"/>
<path d="M976 477L679 793M1034 477L1331 793M947 477L353 793M1063 477L1657 793M918 477L26 793M1092 477L1984 793M888 477L-300 793M1122 477L2310 793M859 477L-626 793M1151 477L2636 793M830 477L-952 793M1180 477L2962 793M801 477L-1278 793M1209 477L3288 793" stroke="#747474" fill="none"/>
<path d="M1005 477V793" stroke="#c4c4c4"/>
</g>
<!-- figure -->
<g clip-path="url(#bc)">
<rect x="760" y="220" width="470" height="545" fill="#3e3e3e"/>
<use href="#bp" fill="#c6c6c6" filter="url(#b5)"/>
<ellipse cx="995" cy="430" rx="34" ry="48" fill="#fff" filter="url(#b9)"/>
<ellipse cx="993" cy="525" rx="38" ry="30" fill="#fff" filter="url(#b9)"/>
<ellipse cx="993" cy="350" rx="26" ry="16" fill="#fff" filter="url(#b3)"/>
<ellipse cx="860" cy="378" rx="80" ry="5" fill="#fff" filter="url(#b3)"/>
<ellipse cx="1130" cy="378" rx="80" ry="5" fill="#fff" filter="url(#b3)"/>
<ellipse cx="925" cy="680" rx="5" ry="65" fill="#fff" filter="url(#b3)" transform="rotate(10 925 680)"/>
<ellipse cx="1060" cy="680" rx="5" ry="65" fill="#fff" filter="url(#b3)" transform="rotate(-10 1060 680)"/>
<ellipse cx="914" cy="745" rx="10" ry="8" fill="#fff" filter="url(#b3)"/>
<ellipse cx="1076" cy="745" rx="10" ry="8" fill="#fff" filter="url(#b3)"/>
<ellipse cx="785" cy="380" rx="8" ry="9" fill="#fff" filter="url(#b3)"/>
<ellipse cx="1205" cy="382" rx="8" ry="9" fill="#fff" filter="url(#b3)"/>
</g>
<ellipse cx="984" cy="272" rx="8" ry="12.500" fill="url(#eg)"/>
<ellipse cx="1006" cy="272" rx="8" ry="12.500" fill="url(#eg)"/>
<path d="M974 296Q994 308 1014 296" fill="none" stroke="#8f8f8f" stroke-width="3.500" stroke-linecap="round"/>
<path d="M974 296Q994 308 1014 296" fill="none" stroke="#cfcfcf" stroke-width="1.400" stroke-linecap="round"/>

<!-- relationship lines -->
<g fill="none" stroke="#e0e0e0" stroke-width="1">
<path d="M921 327L903 331 905 346M951 333L931 336 935 348M1028 310L1047 307 1049 323M1052 317L1070 314 1072 329M915 442L917 458 935 456M1060 424L1062 441M1084 424L1085 439 1067 441"/>
<path d="M971 327L975 333 1013 326 1017 331M926 350L922 352 925 370 923 383 922 400 926 410M1066 350L1068 360 1067 377 1070 387 1066 403"/>
<path d="M936 435L939 442 965 445 966 437 972 437M1022 437L1023 444 1047 440 1052 437"/>
<path d="M1000 364H1062" stroke-dasharray="3 3" opacity=".6"/>
</g>
<!-- bones -->
<g fill="#c05858" stroke="#3fdc3f" stroke-width=".8">
<path d="M994 242L989 287 994 293 999 287Z" fill="#cc5a5a"/>
<path d="M995 298L990 333 994 339 999 333Z"/>
<path d="M991 370L986 417 991 421 996 417Z"/>
<path d="M991 447L988 478 991 483 994 478Z"/>
<path d="M990 493L983 555 989 562 996 555Z"/>
<path d="M789 382L837 373 842 378 838 384Z"/>
<path d="M867 373L903 364 907 367 904 372Z"/>
<path d="M1126 374L1079 364 1075 369 1079 374Z"/>
<path d="M1187 383L1143 373 1138 378 1143 383Z"/>
<path d="M947 368L988 357 992 362 990 367Z" fill="#c07050"/>
<path d="M1042 368L999 358 997 363 999 368Z"/>
<path d="M941 623L943 565 950 559 957 567Z"/>
<path d="M1053 616L1039 567 1044 561 1050 566Z"/>
<path d="M913 735L920 671 928 665 934 673Z"/>
<path d="M1070 718L1055 666 1061 659 1067 664Z"/>
</g>
<path d="M994 242V293M995 298V339M991 370V421M991 447V483M990 493L989 562M789 382L842 378M867 373L907 367M1126 374L1075 369M1187 383L1138 378M947 368L992 362M1042 368L997 363M941 623L950 559M1053 616L1044 561M913 735L928 665M1070 718L1061 659" stroke="#2222dd" stroke-width=".8" fill="none"/>
<path d="M989 287H999M990 333H999M986 417H996M983 555H996M943 565L957 567M1039 567L1050 566M920 671L934 673M1055 666L1067 664M837 373V384M903 364V372M1079 364V374M1143 373V383" stroke="#ee1111" stroke-width="1" fill="none"/>
<!-- manipulators -->
<path d="M943 367V338M943 369H972" stroke="#ee1111" stroke-width="1.200"/>
<path d="M943 333L940 340H946ZM979 369L972 366V372Z" fill="#ee1111"/><circle cx="943" cy="367" r="3.500" fill="#ee1111"/>
<path d="M994 360V332M994 361H1022" stroke="#44ee44" stroke-width="1.200"/>
<path d="M994 327L990 334H998ZM1029 361L1022 358V365Z" fill="#00dd00"/><circle cx="994" cy="360" r="3.800" fill="#00dd00"/>

<!-- rings -->
<circle cx="598" cy="172" r="39.500" fill="none" stroke="#f00" stroke-width="7"/>
<circle cx="598" cy="172" r="35.500" fill="none" stroke="#777" stroke-width="1"/>
<circle cx="598" cy="172" r="32" fill="none" stroke="#0f0" stroke-width="6.500"/>
<circle cx="598" cy="172" r="28" fill="none" stroke="#666" stroke-width="1"/>
<circle cx="598" cy="172" r="24.500" fill="none" stroke="#00f" stroke-width="6.500"/>
<circle cx="598" cy="170" r="17" fill="url(#sg)"/>
<path d="M598 130V134M598 138V142M598 146V150" stroke="#000" stroke-width="2"/>
<path d="M598.500 193V215" stroke="#cfcfcf" stroke-width=".8"/>
<!-- figure & pin icon -->
<g transform="translate(557 124)" fill="#eee"><circle cy="-9" r="2.400"/><rect x="-11" y="-6.500" width="22" height="1.500"/><path d="M-3-6H3L2 2 3 12H-3L-2 2Z"/><path d="M-7-3C-10 0-9 2-6 4M7-3C10 0 9 2 6 4" fill="none" stroke="#eee" stroke-width="1.500"/></g>
<use href="#tri" x="566" y="135"/>
<g transform="translate(637 126)"><path d="M-2-3L3-9 8-5 2 1ZM-6-2L3 7 5 4-3-5Z" fill="#eee"/><path d="M-3 3L-10 10" stroke="#ccc" stroke-width="1.200"/></g>
<use href="#tri" x="646" y="136"/>
<!-- shader ball etc -->
<circle cx="1285" cy="116" r="9" fill="url(#sg)" stroke="#ddd"/>
<path d="M1278 121Q1288 122 1293 112" stroke="#fff" fill="none"/>
<use href="#tri" x="1297" y="127"/>
<g transform="translate(1314 118)" fill="none" stroke="#fff"><rect x="-5.500" y="-9.500" width="11" height="17" stroke-width="1.300"/><path d="M0-9V7M-5-2H5"/><path d="M-7 9H7" stroke-width="2"/></g>
<use href="#tri" x="1441" y="119"/>
<use href="#menuw" x="1470" y="118"/>
<g transform="translate(1470 147)" fill="#fff"><circle cy="-4" r="3.500"/><path d="M-10 1C-10-3-5-3-5-3-8 0-2 3 3 3L3 1 10 3 4 8V5C-3 6-10 5-10 1Z"/><path d="M5-3C8-3 10-1 10 0L7-1Z"/></g>
<g transform="translate(1470 173)" fill="#fff"><path d="M0-11L-4-6H4ZM0 11L-4 6H4ZM-11 0L-6-4V4ZM11 0L6-4V4Z"/><circle r="2.200"/><circle cx="-4.500" r="1.400"/><circle cx="4.500" r="1.400"/><circle cy="-4" r="1.200"/><circle cy="4" r="1.200"/></g>
<g transform="translate(1470 200)"><circle cx="3" cy="-3" r="6.500" fill="none" stroke="#fff" stroke-width="2.200"/><path d="M-2 2L-9 10" stroke="#fff" stroke-width="3" stroke-linecap="round"/></g>
<g transform="translate(1470 227)" fill="none" stroke="#fff" stroke-width="2"><path d="M-9-5V-9H-4M4-9H9V-5M9 5V9H4M-4 9H-9V5M-3 0H3M0-3V3"/></g>
<g transform="translate(1470 255)"><circle r="9.500" fill="#fff"/><path d="M0-7L-6 0H-2.500V9H2.500V0H6Z" fill="#444"/></g>
<!-- cube -->
<circle cx="1407" cy="188" r="38" fill="none" stroke="#626262"/>
<path d="M1369 188H1385M1428 188H1445M1407 150V167M1407 210V226" stroke="#5e5e5e" stroke-width="1.500"/>
<rect x="1385" y="167" width="43" height="43" fill="#7272cc" stroke="#555" stroke-width="2"/>
<text x="1406.500" y="203" font-family="Liberation Sans,sans-serif" font-size="36" font-weight="bold" fill="#8080c4" text-anchor="middle">Z</text>
<text x="1406.500" y="193" font-family="Liberation Sans,sans-serif" font-size="12" fill="#444" text-anchor="middle">Front</text>

<!-- right tree -->
<use href="#mag" x="1567" y="101"/>
<path d="M1837 100L1846 100M1841 96L1836 100 1841 104" stroke="#333" stroke-width="2" fill="#333"/>
<path d="M1863 100H1872M1867 96V104" stroke="#333" stroke-width="2"/>
<use href="#menu" x="1532" y="87"/>
<use href="#eye" x="1562" y="158"/><use href="#arr" x="1588" y="158"/>
<use href="#eye" x="1562" y="178"/><use href="#arr" x="1588" y="178"/>
<use href="#eye" x="1562" y="198"/><use href="#arr" x="1588" y="198"/>
<use href="#eye" x="1562" y="218"/><use href="#arr" x="1588" y="218"/>
<use href="#eye" x="1562" y="238"/><use href="#arr" x="1588" y="238"/>
<use href="#eye" x="1562" y="258"/><use href="#arr" x="1588" y="258"/>
<use href="#eye" x="1562" y="278"/><use href="#arr" x="1588" y="278"/>
<use href="#eye" x="1562" y="298"/><use href="#arr" x="1588" y="298"/>
<use href="#eye" x="1562" y="318"/><use href="#arr" x="1588" y="318"/>
<use href="#eye" x="1562" y="338"/><use href="#arr" x="1588" y="338"/>
<use href="#eyeb" x="1562" y="358"/><use href="#arrb" x="1588" y="358"/>
<use href="#eye" x="1562" y="378"/><use href="#arr" x="1588" y="378"/>
<use href="#eye" x="1562" y="398"/><use href="#arr" x="1588" y="398"/>
<use href="#eye" x="1562" y="418"/><use href="#arr" x="1588" y="418"/>
<use href="#eye" x="1562" y="438"/><use href="#arr" x="1588" y="438"/>
<use href="#eye" x="1562" y="458"/><use href="#arr" x="1588" y="458"/>
<use href="#tri" x="1609" y="159"/><use href="#tri" x="1619" y="179"/><use href="#tri" x="1629" y="199"/><use href="#tri" x="1639" y="219"/><use href="#tri" x="1649" y="239"/><use href="#tri" x="1659" y="259"/><use href="#tri" x="1669" y="279"/><use href="#tri" x="1669" y="319"/><use href="#trik" x="1629" y="359"/><use href="#tri" x="1639" y="379"/><use href="#tri" x="1629" y="419"/><use href="#tri" x="1639" y="439"/>
<g fill="none" stroke="#e8e8e8"><circle cx="1624" cy="153.500" r="4"/><circle cx="1620" cy="160" r="4"/><circle cx="1628" cy="160" r="4"/></g>
<use href="#bone" x="1634" y="178"/><use href="#bone" x="1644" y="198"/><use href="#bone" x="1654" y="218"/><use href="#bone" x="1664" y="238"/><use href="#bone" x="1674" y="258"/><use href="#bone" x="1684" y="278"/><use href="#bone" x="1694" y="298"/><use href="#bone" x="1684" y="318"/><use href="#bone" x="1694" y="338"/><use href="#boneb" x="1644" y="358"/><use href="#bone" x="1654" y="378"/><use href="#bone" x="1664" y="398"/><use href="#bone" x="1644" y="418"/><use href="#bone" x="1654" y="438"/><use href="#bone" x="1664" y="458"/>
<path d="M1718 509L1723 513H1713Z" fill="#fff"/>
<path d="M1706 523L1711 528H1701Z" fill="#fff"/>

<!-- right bottom -->
<use href="#menu" x="1532" y="546"/>
<use href="#tri" x="1665" y="588"/>
<use href="#mag" x="1704" y="588"/>
<use href="#tri" x="1552" y="690"/><use href="#bone" transform="translate(1567 690) scale(1.150)"/>
<use href="#tri" x="1562" y="714"/>
<rect x="1570.500" y="708" width="13" height="13" fill="none" stroke="#eee"/>
<text x="1577" y="719" font-family="Liberation Sans,sans-serif" font-size="11" fill="#ccc" text-anchor="middle">G</text>
<path d="M1672 615L1680 615 1676 610Z" fill="#444"/><path d="M1672 722L1680 722 1676 727Z" fill="#444"/>
<use href="#chko" x="1561" y="747"/>
<use href="#gear" x="1857" y="626"/><use href="#gear" x="1857" y="702"/>
<use href="#mv" x="1717" y="647"/><use href="#mv" x="1717" y="723"/>
<path d="M1753 656H1772M1785 656H1807M1753 732H1772M1785 732H1807" stroke="#aaa"/>
<use href="#minus" x="1741" y="656"/><use href="#minus" x="1741" y="732"/>
<use href="#plus" x="1812" y="656"/><use href="#plus" x="1812" y="732"/>
<use href="#knob" x="1778" y="656"/><use href="#knob" x="1778" y="732"/>
<path d="M1718 759L1723 763H1713Z" fill="#fff"/>
<path d="M1531 780L1535 786H1527Z" fill="#fff"/><path d="M1531 799L1535 793H1527Z" fill="#fff"/>
<path d="M943 818L948 812H938Z" fill="#fff"/>
</svg>
</div></body></html>
